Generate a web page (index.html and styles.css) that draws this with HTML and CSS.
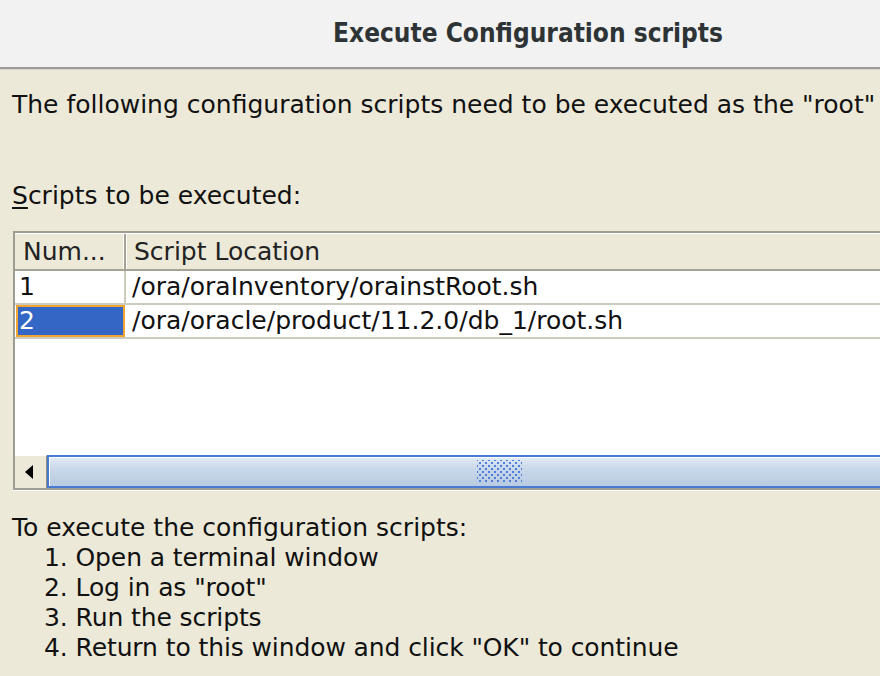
FILE: index.html
```html
<!DOCTYPE html>
<html>
<head>
<meta charset="utf-8">
<link rel="stylesheet" href="styles.css">
</head>
<body>
<div class="titlebar"><span class="title">Execute Configuration scripts</span></div>
<div class="content">
  <p class="intro">The following configuration scripts need to be executed as the "root"</p>
  <p class="label"><u>S</u>cripts to be executed:</p>
  <div class="table">
    <div class="thead">
      <div class="th c1">Num...</div>
      <div class="th c2">Script Location</div>
    </div>
    <div class="tbody">
      <div class="row">
        <div class="td c1">1</div>
        <div class="td c2">/ora/oraInventory/orainstRoot.sh</div>
      </div>
      <div class="row">
        <div class="td c1 sel">2</div>
        <div class="td c2">/ora/oracle/product/11.2.0/db_1/root.sh</div>
      </div>
    </div>
    <div class="hscroll">
      <div class="arrow"><span class="tri"></span></div>
      <div class="track"><div class="thumb"></div></div>
    </div>
  </div>
  <div class="steps">
    <p>To execute the configuration scripts:</p>
    <div class="step">1. Open a terminal window</div>
    <div class="step">2. Log in as "root"</div>
    <div class="step">3. Run the scripts</div>
    <div class="step">4. Return to this window and click "OK" to continue</div>
  </div>
</div>
</body>
</html>
```
FILE: styles.css
```css
html, body {
  margin: 0;
  padding: 0;
  width: 880px;
  height: 676px;
  overflow: hidden;
  background: #ece9d8;
  font-family: "DejaVu Sans", sans-serif;
  color: #111;
}
.titlebar {
  height: 67px;
  background: #f2f2f2;
  border-bottom: 2px solid #9a9a98;
  box-shadow: 0 1px 0 #d8d6c8;
  display: flex;
  align-items: center;
  justify-content: center;
  padding-left: 176px;
  box-sizing: content-box;
}
.title {
  font-family: "DejaVu Sans Condensed", "DejaVu Sans", sans-serif;
  font-weight: bold;
  font-size: 26px;
  color: #2e3436;
  margin-top: -2px;
}
.content {
  padding-left: 12px;
  font-size: 25px;
  white-space: nowrap;
}
.intro {
  margin: 0;
  padding-top: 22px;
  line-height: 28px;
}
.label {
  margin: 0;
  padding-top: 63px;
  line-height: 28px;
}
.label u {
  text-decoration-thickness: 2px;
  text-underline-offset: 3px;
}
.table {
  margin-top: 21px;
  margin-left: 1px;
  width: 900px;
  border: 2px solid #9f9d92;
  border-right: none;
  background: #fff;
  height: 255px;
  display: flex;
  flex-direction: column;
  box-shadow: 0 1px 0 #fff;
}
.thead {
  display: flex;
  height: 35px;
  background: #ece9d8;
  border-top: 1px solid #fff;
  border-bottom: 2px solid #a5a394;
}
.th {
  line-height: 36px;
  padding-left: 8px;
  box-sizing: border-box;
  color: #222;
}
.thead .c1 {
  width: 111px;
  border-right: 2px solid #a5a394;
  box-shadow: inset -1px 0 0 #fff;
}
.thead .c2 {
  flex: 1;
  border-left: 1px solid #fff;
  padding-left: 7px;
}
.tbody {
  flex: 1;
}
.row {
  display: flex;
  height: 32px;
  border-bottom: 2px solid #cdcbbe;
}
.td {
  line-height: 32px;
  box-sizing: border-box;
}
.row .c1 {
  width: 111px;
  padding-left: 4px;
  border-right: 2px solid #cdcbbe;
}
.row .c2 {
  flex: 1;
  padding-left: 6px;
}
.row .sel {
  background: #3466c6;
  color: #fff;
  border: 2px solid #f0a431;
  margin: 0 1px 0 1px;
  width: 109px;
  padding-left: 1px;
  line-height: 28px;
}
.hscroll {
  display: flex;
  height: 33px;
  background: #ece9d8;
}
.arrow {
  width: 32px;
  display: flex;
  align-items: center;
  justify-content: center;
  border-top: 1px solid #fff;
  border-right: 1px solid #8d8b80;
  box-sizing: border-box;
}
.tri {
  width: 0;
  height: 0;
  border-top: 7px solid transparent;
  border-bottom: 7px solid transparent;
  border-right: 8px solid #000;
  margin-right: 4px;
}
.track {
  flex: 1;
  border: 2px solid #4a7bd4;
  border-right: none;
  background: linear-gradient(#e4ecf6, #c9d8ea 40%, #b9cbe2);
  box-shadow: inset 1px 1px 0 #fff;
  display: flex;
  align-items: center;
  padding-left: 428px;
}
.thumb {
  width: 45px;
  height: 23px;
  background-image: radial-gradient(circle, #4f7fd8 1px, transparent 1.6px),
    radial-gradient(circle, #4f7fd8 1px, transparent 1.6px);
  background-size: 6px 6px, 6px 6px;
  background-position: 0 0, 3px 3px;
}
.steps {
  padding-top: 23px;
  line-height: 30px;
}
.steps p {
  margin: 0;
}
.step {
  padding-left: 32px;
  letter-spacing: -0.1px;
}
```
